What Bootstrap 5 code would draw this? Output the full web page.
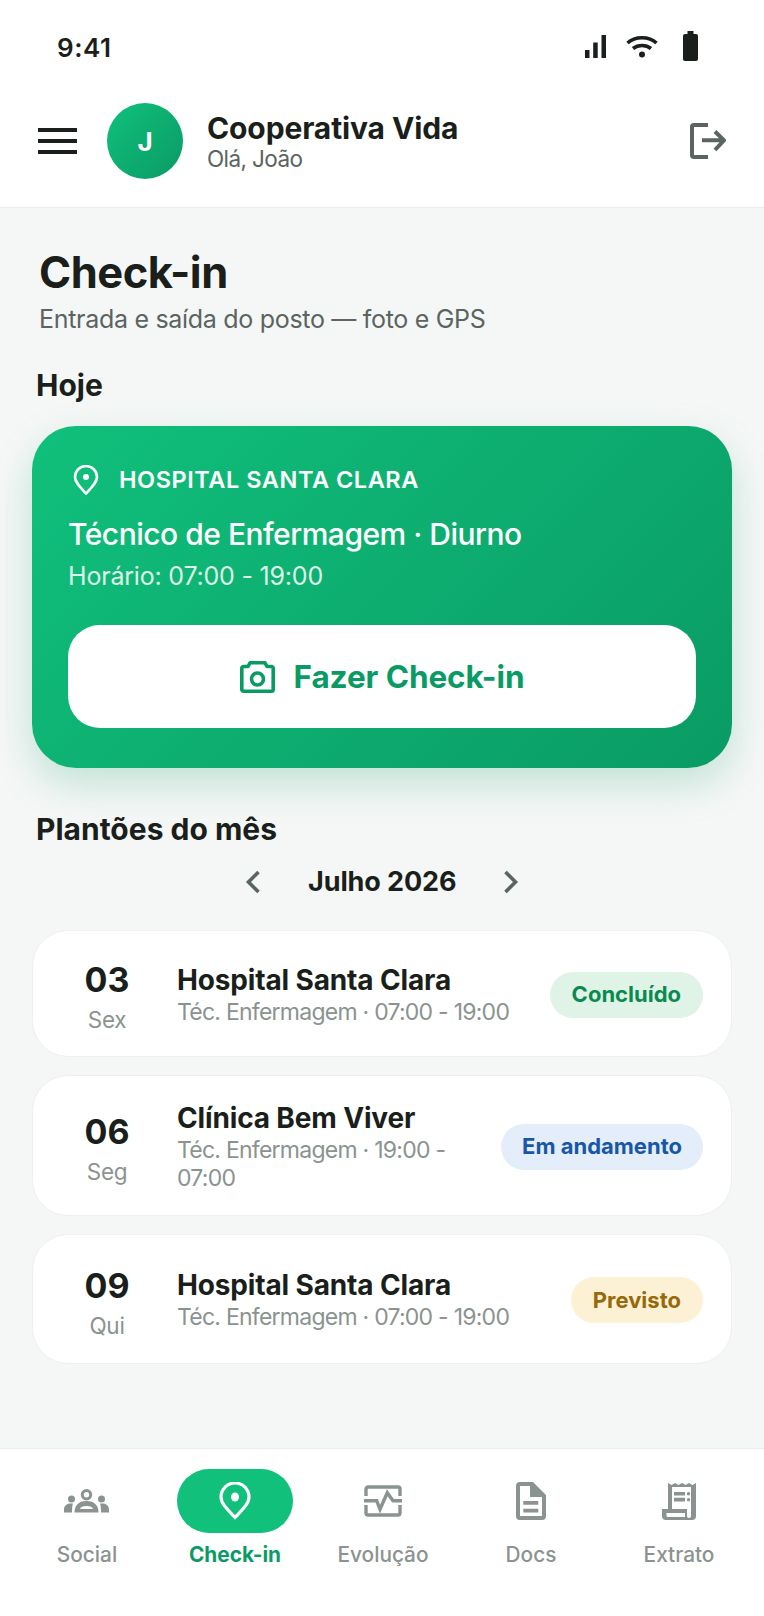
<!DOCTYPE html>
<html lang="pt">
<head>
    <meta charset="UTF-8">
    <title>Check-in</title>
    <meta name="viewport" content="width=device-width, initial-scale=1">
    <link href="https://cdn.jsdelivr.net/npm/bootstrap@5.3.0/dist/css/bootstrap.min.css" rel="stylesheet">
    <style>
        body { font-family: Inter, "Noto Sans", sans-serif; background: #f5f7f6; color: #1a1f1c; height: 1616px; overflow: hidden; }
        .app { height: 1616px; }
        .topo { background: #fff; height: 208px; border-bottom: 1px solid #eceeed; }
        .status { height: 88px; padding: 30px 66px 0 57px; }
        .hora { font-size: 26px; font-weight: 600; letter-spacing: .5px; line-height: 36px; }
        .status-ico { margin-top: 1px; }
        .ico-wifi { margin-left: 20px; margin-right: 25px; }
        .cab { padding: 15px 38px 0 38px; }
        .avatar { width: 76px; height: 76px; background: linear-gradient(135deg, #10c07b, #0a9b65); font-size: 26px; font-weight: 700; margin-left: 29px; margin-right: 24px; }
        .marca { font-size: 30px; font-weight: 700; line-height: 36px; letter-spacing: -.12px; }
        .ola { font-size: 22.5px; line-height: 26px; color: #5b6460; letter-spacing: -.6px; }
        .conteudo { padding: 0 32px; }
        .titulo { font-size: 43.5px; font-weight: 700; line-height: 52px; margin: 38px 0 0 7px; letter-spacing: -.5px; }
        .sub { font-size: 25px; color: #5b6460; line-height: 36px; margin: 3px 0 0 7px; letter-spacing: -.3px; }
        .secao { font-size: 30px; font-weight: 700; line-height: 36px; margin: 0 0 0 4px; }
        .hoje { margin-top: 30px; }
        .plantao { height: 342px; margin-top: 23px; padding: 36px 36px 0; border-radius: 44px; background: linear-gradient(135deg, #10c07b, #0a9b65); box-shadow: 0 16px 40px rgba(10,155,101,.22); }
        .local { font-size: 23.5px; font-weight: 600; letter-spacing: .55px; line-height: 36px; margin-left: 5px; gap: 20px; }
        .funcao { font-size: 30px; font-weight: 500; line-height: 40px; margin-top: 16px; letter-spacing: -.5px; }
        .horario { font-size: 25px; line-height: 36px; margin-top: 4px; opacity: .85; letter-spacing: -.2px; }
        .acao { height: 103px; margin-top: 31px; border-radius: 32px; background: #fff; font-size: 31.5px; font-weight: 700; color: #0a9b65; gap: 19px; letter-spacing: -.1px; }
        .meses { margin-top: 43px; }
        .mes { height: 36px; margin-top: 17px; gap: 47px; }
        .mes-nome { font-size: 27px; font-weight: 700; width: 148px; white-space: nowrap; letter-spacing: -.1px; }
        .plantoes { margin-top: 30px; gap: 18px; }
        .item { background: #fff; border: 1px solid #edf0ee; border-radius: 36px; padding: 0 28px 0 0; }
        .dia { width: 144px; padding-left: 4px; padding-top: 6px; text-align: center; flex-shrink: 0; }
        .dia-num { font-size: 34px; font-weight: 700; line-height: 44px; }
        .dia-sem { font-size: 22.5px; line-height: 30px; color: #8a938f; margin-top: 3px; letter-spacing: -.3px; }
        .nome { font-size: 28px; font-weight: 700; line-height: 36px; letter-spacing: -.15px; }
        .det { font-size: 23px; line-height: 28px; color: #8a938f; letter-spacing: -.75px; }
        .info { flex: 1 1 0; min-width: 0; }
        .det-curto { width: 285px; }
        .selo { font-size: 22px; font-weight: 700; height: 46px; padding: 0 22px; margin-top: 2px; border-radius: 23px; white-space: nowrap; }
        .selo-ok { background: #dff3e6; color: #0a8a50; }
        .selo-and { background: #e3eefa; color: #1857a8; padding: 0 21px; }
        .selo-prev { background: #fdf1d5; color: #96690a; }
        .rodape { position: absolute; left: 0; right: 0; bottom: 0; height: 168px; background: #fff; border-top: 1px solid #eceeed; padding: 20px 0 0 13px; }
        .aba { width: 148px; color: #8a938f; font-size: 20.8px; font-weight: 500; }
        .aba-ico { width: 116px; height: 64px; border-radius: 32px; }
        .aba-txt { margin-top: 4px; line-height: 36px; }
        .aba-on { color: #0a9b65; font-weight: 700; }
        .aba-on .aba-ico { background: #10c07b; }
    </style>
</head>
<body>
<div class="app position-relative">
    <div class="topo">
        <div class="status d-flex justify-content-between align-items-start">
            <div class="hora">9:41</div>
            <div class="status-ico d-flex align-items-center">
                <svg width="21" height="23" viewBox="0 0 21 23" fill="#1a1f1c"><rect x="0" y="15" width="4.500" height="8"/><rect x="8.200" y="7.500" width="4.500" height="15.500"/><rect x="16.500" y="0" width="4.500" height="23"/></svg>
                <svg class="ico-wifi" width="32" height="23" viewBox="0 0 32 23" fill="none" stroke="#1a1f1c" stroke-width="3.600"><path d="M1.500 8C9 1 23 1 30.500 8"/><path d="M7 13.500C12 9.500 20 9.500 25 13.500"/><circle cx="16" cy="19.500" r="3" fill="#1a1f1c" stroke="none"/></svg>
                <svg width="15" height="30" viewBox="0 0 15 30" fill="#1a1f1c"><rect x="4.500" y="0" width="6" height="4"/><rect x="0" y="3" width="15" height="27" rx="2"/></svg>
            </div>
        </div>
        <div class="cab d-flex align-items-center">
            <svg width="40" height="26" viewBox="0 0 40 26" fill="#1a1f1c"><rect y="0" width="39" height="4"/><rect y="11" width="39" height="4"/><rect y="22" width="39" height="4"/></svg>
            <div class="avatar rounded-circle text-white d-flex align-items-center justify-content-center">J</div>
            <div class="flex-grow-1">
                <div class="marca">Cooperativa Vida</div>
                <div class="ola">Olá, João</div>
            </div>
            <svg width="36" height="36" viewBox="0 0 36 36" fill="none" stroke="#5b6460" stroke-width="4"><path d="M18 2H4a2 2 0 0 0-2 2v28a2 2 0 0 0 2 2h14"/><path d="M12 17.300H33M25 8.500l9 8.800-9 9.700"/></svg>
        </div>
    </div>

    <div class="conteudo">
        <div class="titulo">Check-in</div>
        <div class="sub">Entrada e saída do posto — foto e GPS</div>
        <div class="secao hoje">Hoje</div>

        <div class="plantao text-white">
            <div class="local d-flex align-items-center">
                <svg width="26" height="30" viewBox="0 0 26 30" fill="none" stroke="#fff" stroke-width="2.600"><path d="M13 28.500C7 22 2 17.500 2 12a11 11 0 0 1 22 0c0 5.500-5 10-11 16.500z"/><circle cx="13" cy="12" r="3" fill="#fff" stroke="none"/></svg>
                <span>HOSPITAL SANTA CLARA</span>
            </div>
            <div class="funcao">Técnico de Enfermagem · Diurno</div>
            <div class="horario">Horário: 07:00 - 19:00</div>
            <div class="acao d-flex align-items-center justify-content-center">
                <svg width="35" height="32" viewBox="0 0 35 32" fill="none" stroke="#0a9b65" stroke-width="3.600" stroke-linejoin="round"><path d="M3.500 5.500H8l2-3.700h15l2 3.700h4.500a1.700 1.700 0 0 1 1.700 1.700v21.300a1.700 1.700 0 0 1-1.700 1.700h-28a1.700 1.700 0 0 1-1.700-1.700V7.200a1.700 1.700 0 0 1 1.700-1.700z"/><circle cx="17.500" cy="18" r="6"/></svg>
                <span>Fazer Check-in</span>
            </div>
        </div>

        <div class="secao meses">Plantões do mês</div>
        <div class="mes d-flex align-items-center justify-content-center">
            <svg width="16" height="24" viewBox="0 0 16 24" fill="none" stroke="#5b6460" stroke-width="3.600"><path d="M13.500 2L3.500 12l10 10"/></svg>
            <div class="mes-nome text-center">Julho 2026</div>
            <svg width="16" height="24" viewBox="0 0 16 24" fill="none" stroke="#5b6460" stroke-width="3.600"><path d="M2.500 2l10 10-10 10"/></svg>
        </div>

        <div class="plantoes d-flex flex-column">
            <div class="item d-flex align-items-center" style="height:127px">
                <div class="dia"><div class="dia-num">03</div><div class="dia-sem">Sex</div></div>
                <div class="info"><div class="nome">Hospital Santa Clara</div><div class="det">Téc. Enfermagem · 07:00 - 19:00</div></div>
                <div class="selo selo-ok d-flex align-items-center">Concluído</div>
            </div>
            <div class="item d-flex align-items-center" style="height:141px">
                <div class="dia"><div class="dia-num">06</div><div class="dia-sem">Seg</div></div>
                <div class="info"><div class="nome">Clínica Bem Viver</div><div class="det det-curto">Téc. Enfermagem · 19:00 - 07:00</div></div>
                <div class="selo selo-and d-flex align-items-center">Em andamento</div>
            </div>
            <div class="item d-flex align-items-center" style="height:130px">
                <div class="dia"><div class="dia-num">09</div><div class="dia-sem">Qui</div></div>
                <div class="info"><div class="nome">Hospital Santa Clara</div><div class="det">Téc. Enfermagem · 07:00 - 19:00</div></div>
                <div class="selo selo-prev d-flex align-items-center">Previsto</div>
            </div>
        </div>
    </div>

    <div class="rodape d-flex">
        <div class="aba d-flex flex-column align-items-center">
            <div class="aba-ico d-flex align-items-center justify-content-center">
                <svg width="46" height="24" viewBox="0 0 46 24" fill="#8a938f"><circle cx="22.500" cy="5.700" r="4.200" fill="none" stroke="#8a938f" stroke-width="3"/><circle cx="7.500" cy="10" r="3.500"/><circle cx="37.500" cy="10" r="3.500"/><path d="M0 23.500v-3c0-3.500 3-6 6-6h3c-.8 2-1 5-1 9zM45 23.500v-3c0-3.500-3-6-6-6h-3c.8 2 1 5 1 9z"/><path d="M10.500 23.500c0-7 4-11.500 12-11.500s12 4.500 12 11.500zM16 20h13c-.5-2-2.500-3-6.500-3s-6 1-6.500 3z" fill-rule="evenodd"/></svg>
            </div>
            <div class="aba-txt">Social</div>
        </div>
        <div class="aba aba-on d-flex flex-column align-items-center">
            <div class="aba-ico d-flex align-items-center justify-content-center">
                <svg width="32" height="38" viewBox="0 0 32 38" fill="none" stroke="#fff" stroke-width="3.200"><path d="M16 35.500C8 27 2 21.500 2 15a14 14 0 0 1 28 0c0 6.500-6 12-14 20.500z"/><ellipse cx="16" cy="15" rx="4" ry="4.500" fill="#fff" stroke="none"/></svg>
            </div>
            <div class="aba-txt">Check-in</div>
        </div>
        <div class="aba d-flex flex-column align-items-center">
            <div class="aba-ico d-flex align-items-center justify-content-center">
                <svg width="38" height="32" viewBox="0 0 38 32" fill="none" stroke="#8a938f" stroke-width="3.400"><path d="M2 11V4a2 2 0 0 1 2-2h30a2 2 0 0 1 2 2v7M2 20v8a2 2 0 0 0 2 2h30a2 2 0 0 0 2-2v-8"/><path d="M0 15.700h12.700l3.300 8.600 7.300-16.600 5.700 8H38"/></svg>
            </div>
            <div class="aba-txt">Evolução</div>
        </div>
        <div class="aba d-flex flex-column align-items-center">
            <div class="aba-ico d-flex align-items-center justify-content-center">
                <svg width="30" height="38" viewBox="0 0 30 38" fill="#8a938f"><path d="M4 0h13l13 13v21a4 4 0 0 1-4 4H4a4 4 0 0 1-4-4V4a4 4 0 0 1 4-4zM4 4v30h22V15H14V4zM7.300 19h15v3.700h-15zM7.300 26.700h15v3.800h-15z" fill-rule="evenodd"/></svg>
            </div>
            <div class="aba-txt">Docs</div>
        </div>
        <div class="aba d-flex flex-column align-items-center">
            <div class="aba-ico d-flex align-items-center justify-content-center">
                <svg width="34" height="38" viewBox="0 0 34 38" fill="#8a938f"><path d="M6 1l3.500 2 3.500-2 3.500 2L20 1l3.500 2L27 1l3.500 2L34 1v33a4 4 0 0 1-4 4H4a4 4 0 0 1-4-4v-7h6zM10 5v22h15v7a2 2 0 0 0 4 0V5zM4.500 31v2.500a1.500 1.500 0 0 0 1.500 1.500h17v-4z" fill-rule="evenodd"/><path d="M12 10h11v3.500H12zM12 15.700h11v3.800H12z"/><circle cx="26.500" cy="11.700" r="1.700"/><circle cx="26.500" cy="17.700" r="1.700"/></svg>
            </div>
            <div class="aba-txt">Extrato</div>
        </div>
    </div>
</div>
<script src="https://cdn.jsdelivr.net/npm/bootstrap@5.3.0/dist/js/bootstrap.bundle.min.js"></script>
</body>
</html>
